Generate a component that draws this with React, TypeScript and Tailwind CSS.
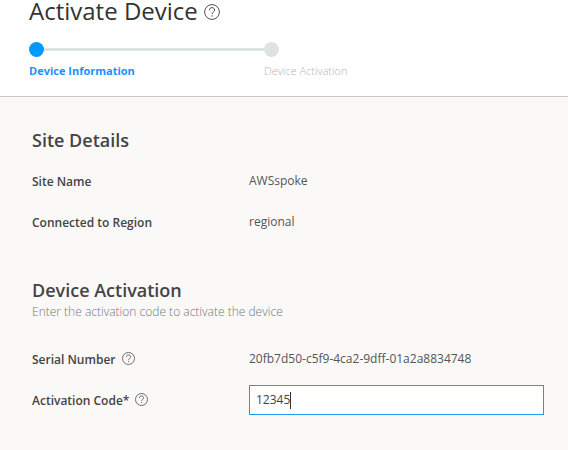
import React from "react";

function Help({ size }: { size: number }) {
  return (
    <svg width={size} height={size} viewBox="0 0 16 16" fill="none" stroke="#505050" strokeWidth="1" className="shrink-0">
      <circle cx="8" cy="8" r="7.4" />
      <path d="M5.4 6.2C5.4 4.4 6.6 3.6 8 3.6s2.6.9 2.6 2.4c0 1.9-2.5 1.9-2.5 4" />
      <path d="M8.1 11.2v1.4" />
    </svg>
  );
}

export default function App() {
  return (
    <div className="flex h-[450px] w-[568px] flex-col bg-[#faf9f8] font-['Open_Sans','Noto_Sans',sans-serif] text-[12px] text-[#444]">
      <header className="h-[97px] shrink-0 border-b border-[#c8c8c8] bg-white pl-[29px]">
        <div className="flex h-6 items-center gap-[6px]">
          <h1 className="-mt-[2px] whitespace-nowrap text-[24px] leading-6 text-[#333]">Activate Device</h1>
          <Help size={16} />
        </div>
        <div className="mt-[18px] flex items-center">
          <span className="size-[15px] rounded-full bg-[#0099ff]" />
          <span className="h-[3px] w-[220px] bg-[#dde3e5]" />
          <span className="size-[15px] rounded-full bg-[#dde3e5]" />
        </div>
        <div className="mt-[6px] flex text-[11px] leading-4">
          <span className="w-[235px] font-bold text-[#1a90ff]">Device Information</span>
          <span className="font-light text-[#b5b5b5]">Device Activation</span>
        </div>
      </header>
      <main className="pl-8">
        <h2 className="mt-[31px] text-[18px] font-semibold leading-6">Site Details</h2>
        <div className="mt-[20px] flex leading-5">
          <span className="w-[217px] font-semibold">Site Name</span>
          <span className="-mt-px text-[#555]">AWSspoke</span>
        </div>
        <div className="mt-[21px] flex leading-5">
          <span className="w-[217px] font-semibold">Connected to Region</span>
          <span className="-mt-px text-[#555]">regional</span>
        </div>
        <h2 className="mt-[45px] text-[18px] font-semibold leading-6">Device Activation</h2>
        <p className="mt-px font-light leading-[18px] text-[#777]">Enter the activation code to activate the device</p>
        <div className="mt-[29px] flex h-5 leading-5">
          <div className="flex w-[217px] gap-[6px] font-semibold">Serial Number<span className="pt-[2px]"><Help size={13} /></span></div>
          <span className="-mt-px text-[#555]">20fb7d50-c5f9-4ca2-9dff-01a2a8834748</span>
        </div>
        <div className="mt-[15px] flex leading-5">
          <div className="flex w-[217px] gap-[6px] pt-[6px] font-semibold">Activation Code*<span className="pt-[2px]"><Help size={13} /></span></div>
          <div className="flex h-[30px] w-[295px] items-center border border-[#1a9ef0] bg-white pl-[6px]">
            <span className="-mt-px">12345</span>
            <span className="h-[17px] w-px bg-[#333]" />
          </div>
        </div>
      </main>
    </div>
  );
}
